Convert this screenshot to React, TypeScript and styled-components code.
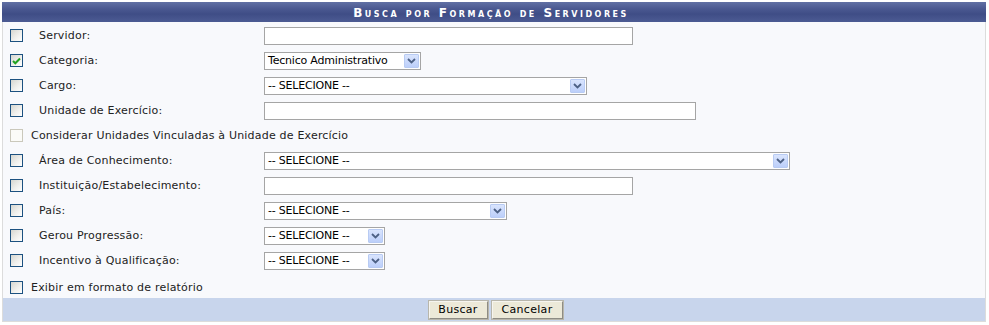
import React from "react";
import styled, { createGlobalStyle } from "styled-components";

const GlobalStyle = createGlobalStyle`
  html, body { margin: 0; padding: 0; background: #ffffff; }
  body { font-family: "DejaVu Sans", Verdana, sans-serif; font-size: 11px; color: #222; }
`;

const Panel = styled.div`
  margin: 2px 0 0 2px;
  width: 984px;
  border: 1px solid #dcdcdc;
  border-top: none;
  box-sizing: border-box;
`;

const Header = styled.div`
  height: 20px;
  margin: 0 -1px;
  background: linear-gradient(#6170a4 0%, #4a5890 35%, #3f4d86 60%, #4c5b93 100%);
  color: #ffffff;
  font-weight: bold;
  font-variant: small-caps;
  font-size: 12px;
  letter-spacing: 2.5px;
  display: flex;
  align-items: center;
  justify-content: center;
  padding: 1px 6px 0 0;
  box-sizing: border-box;
`;

const Body = styled.div`
  background: #f8f9fc;
  padding-top: 1px;
`;

const Row = styled.div<{ $last?: boolean }>`
  display: grid;
  grid-template-columns: 261px 1fr;
  align-items: center;
  height: 25px;
  box-sizing: border-box;
  padding-top: ${(p) => (p.$last ? 3 : 0)}px;
`;

const LabelCell = styled.label<{ $wide?: boolean }>`
  display: flex;
  align-items: center;
  gap: ${(p) => (p.$wide ? 8 : 16)}px;
  padding-left: 7px;
  white-space: nowrap;
  letter-spacing: 0.2px;
  grid-column: ${(p) => (p.$wide ? "1 / span 2" : "auto")};
`;

const Box = styled.span<{ $disabled?: boolean }>`
  width: 13px;
  height: 13px;
  box-sizing: border-box;
  border: 1px solid ${(p) => (p.$disabled ? "#cac8bb" : "#1c5180")};
  background: ${(p) =>
    p.$disabled ? "#fbfbf8" : "linear-gradient(135deg, #d6d6d0 0%, #efefec 55%, #ffffff 100%)"};
  display: inline-flex;
  align-items: center;
  justify-content: center;
  flex: none;
`;

const TextInput = styled.div<{ $w: number }>`
  width: ${(p) => p.$w}px;
  height: 18px;
  box-sizing: border-box;
  border: 1px solid #a5a5a5;
  background: #ffffff;
`;

const SelectBox = styled.div<{ $w: number }>`
  width: ${(p) => p.$w}px;
  height: 18px;
  box-sizing: border-box;
  border: 1px solid #a5a5a5;
  background: #ffffff;
  display: flex;
  align-items: center;
  justify-content: space-between;
  padding-left: 3px;
  padding-right: 1px;
  font-family: "DejaVu Sans", Verdana, sans-serif;
  font-size: 11px;
  letter-spacing: -0.2px;
  color: #000;
  white-space: nowrap;
`;

const Arrow = styled.span`
  width: 15px;
  height: 14px;
  box-sizing: border-box;
  border: 1px solid #b8cbf3;
  border-radius: 1px;
  background: linear-gradient(#d9e4fd, #bccffa);
  display: inline-flex;
  align-items: center;
  justify-content: center;
  flex: none;
`;

const Footer = styled.div`
  background: #c8d5ec;
  height: 23px;
  display: flex;
  align-items: center;
  justify-content: center;
  gap: 4px;
  padding-left: 3px;
`;

const Button = styled.button<{ $w: number }>`
  width: ${(p) => p.$w}px;
  height: 18px;
  padding: 0;
  font-family: "DejaVu Sans", Verdana, sans-serif;
  font-size: 11px;
  letter-spacing: 0.3px;
  color: #000;
  background: #ece9d8;
  border: 1px solid;
  border-color: #f6f5ef #8e8c84 #8e8c84 #f6f5ef;
  box-shadow: 0 0 0 1px #b8b6ab;
`;

const Check = () => (
  <svg width="9" height="8" viewBox="0 0 9 8">
    <path d="M1 4 L3.3 6.3 L8 1.5" fill="none" stroke="#21a121" strokeWidth="2" />
  </svg>
);

const Chevron = () => (
  <svg width="9" height="6" viewBox="0 0 9 6">
    <path d="M1 1 L4.5 4.5 L8 1" fill="none" stroke="#4d6185" strokeWidth="1.8" />
  </svg>
);

type Field = { kind: "text" | "select"; w: number; value?: string };

const Select = ({ w, value }: { w: number; value: string }) => (
  <SelectBox $w={w}>
    <span>{value}</span>
    <Arrow>
      <Chevron />
    </Arrow>
  </SelectBox>
);

const rows: { label: string; checked?: boolean; field: Field }[] = [
  { label: "Servidor:", field: { kind: "text", w: 369 } },
  { label: "Categoria:", checked: true, field: { kind: "select", w: 157, value: "Tecnico Administrativo" } },
  { label: "Cargo:", field: { kind: "select", w: 323, value: "-- SELECIONE --" } },
  { label: "Unidade de Exercício:", field: { kind: "text", w: 432 } },
];

const rows2: { label: string; field: Field }[] = [
  { label: "Área de Conhecimento:", field: { kind: "select", w: 526, value: "-- SELECIONE --" } },
  { label: "Instituição/Estabelecimento:", field: { kind: "text", w: 369 } },
  { label: "País:", field: { kind: "select", w: 243, value: "-- SELECIONE --" } },
  { label: "Gerou Progressão:", field: { kind: "select", w: 121, value: "-- SELECIONE --" } },
  { label: "Incentivo à Qualificação:", field: { kind: "select", w: 121, value: "-- SELECIONE --" } },
];

const FieldView = ({ f }: { f: Field }) =>
  f.kind === "text" ? <TextInput $w={f.w} /> : <Select w={f.w} value={f.value || ""} />;

export default function App() {
  return (
    <>
      <GlobalStyle />
      <Panel>
        <Header>Busca por Formação de Servidores</Header>
        <Body>
          {rows.map((r) => (
            <Row key={r.label}>
              <LabelCell>
                <Box>{r.checked && <Check />}</Box>
                {r.label}
              </LabelCell>
              <FieldView f={r.field} />
            </Row>
          ))}
          <Row>
            <LabelCell $wide>
              <Box $disabled />
              Considerar Unidades Vinculadas à Unidade de Exercício
            </LabelCell>
          </Row>
          {rows2.map((r) => (
            <Row key={r.label}>
              <LabelCell>
                <Box />
                {r.label}
              </LabelCell>
              <FieldView f={r.field} />
            </Row>
          ))}
          <Row $last>
            <LabelCell $wide>
              <Box />
              Exibir em formato de relatório
            </LabelCell>
          </Row>
        </Body>
        <Footer>
          <Button $w={59}>Buscar</Button>
          <Button $w={71}>Cancelar</Button>
        </Footer>
      </Panel>
    </>
  );
}
